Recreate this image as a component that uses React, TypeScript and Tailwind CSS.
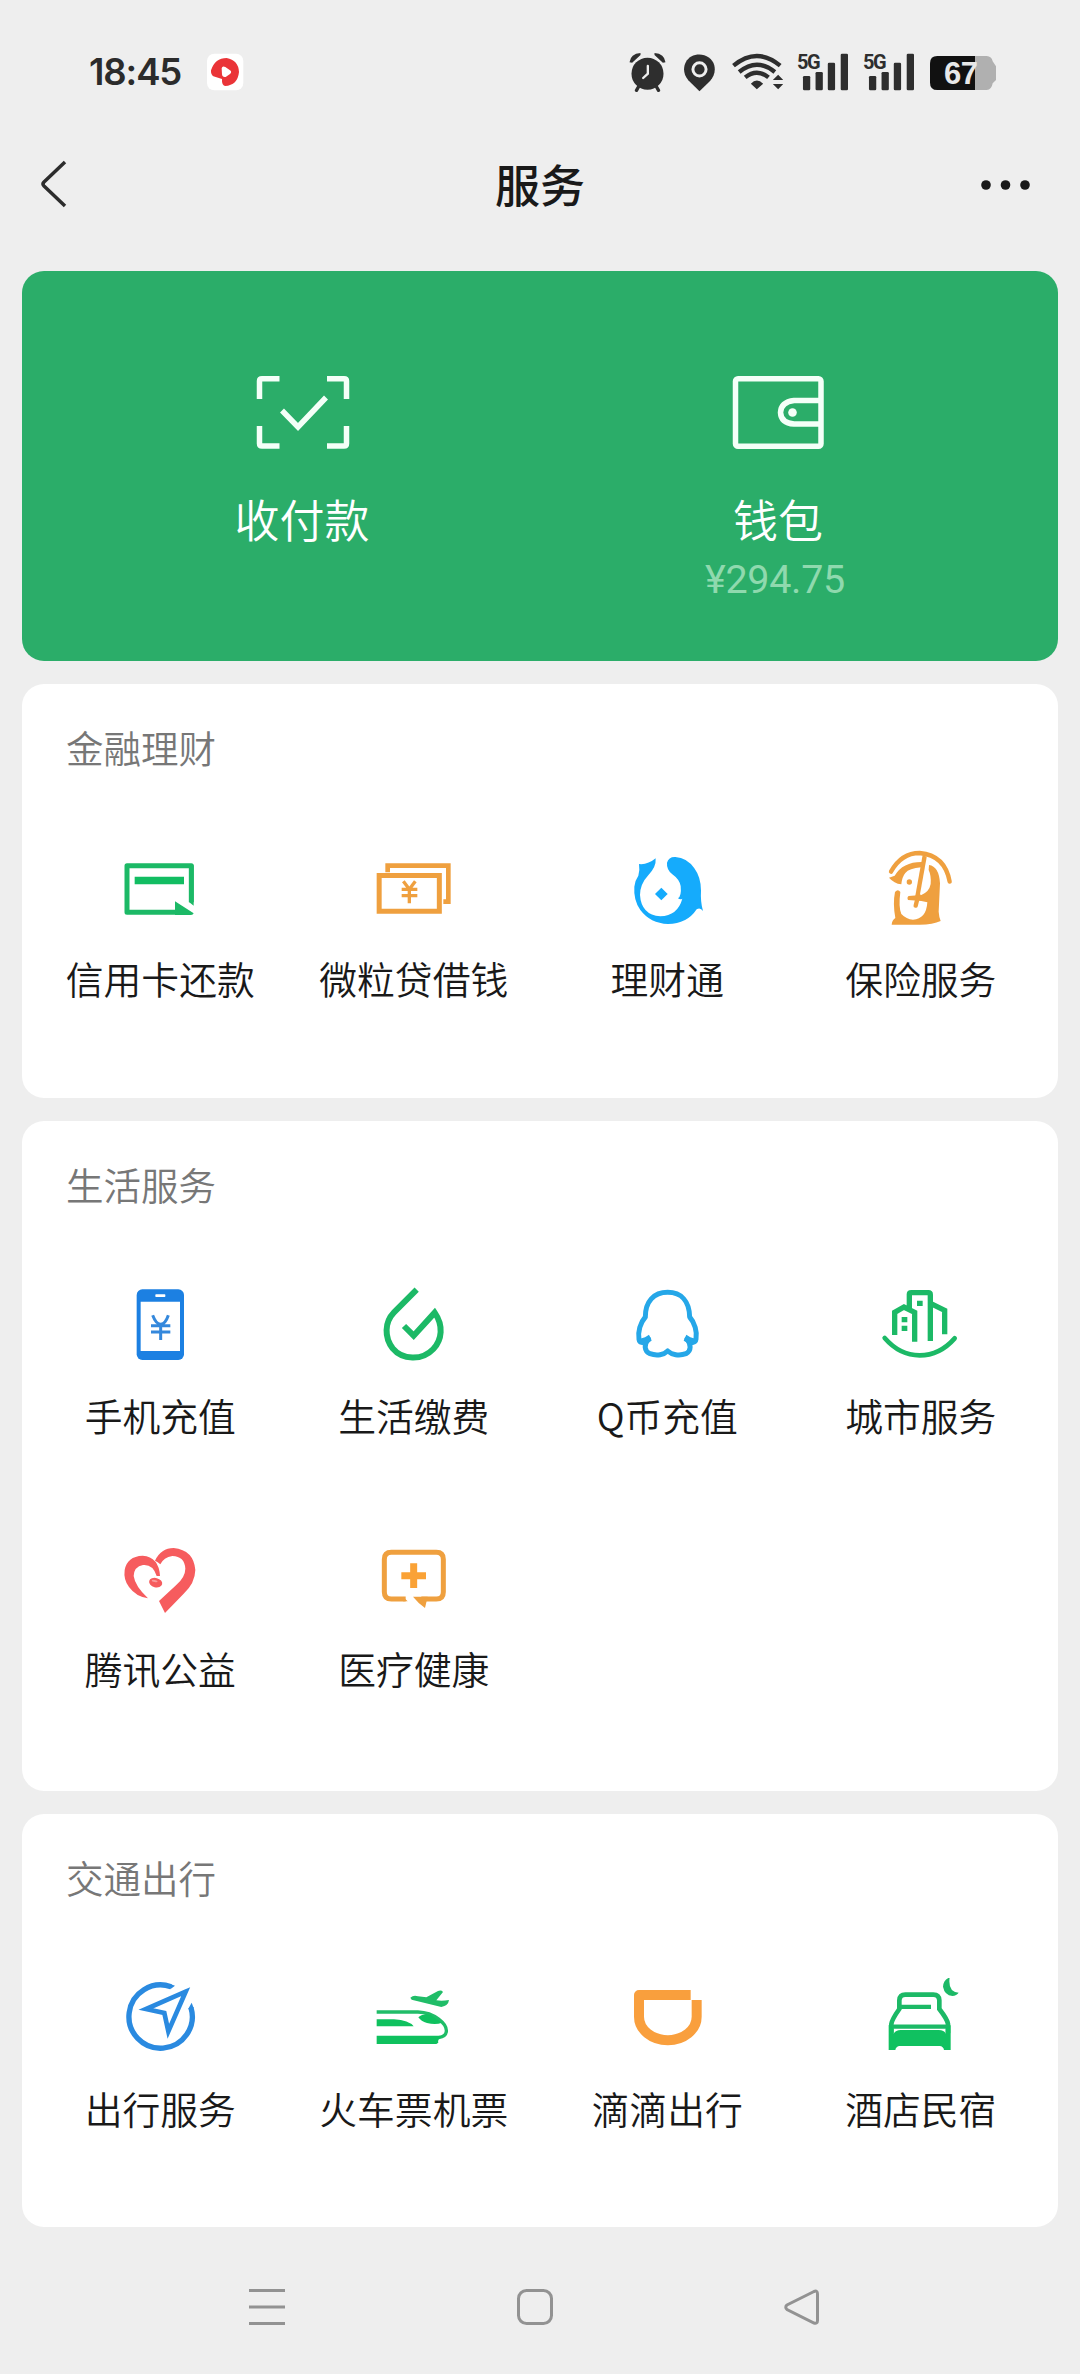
import type { ReactNode } from 'react';

const GREEN = '#1cb966';
const ORANGE = '#efa03f';
const BLUE = '#2a8ae0';

function Icon({ box, children }: { box: string; children: ReactNode }) {
  return (
    <svg viewBox={box} className="h-20 w-20 shrink-0" fill="none">
      {children}
    </svg>
  );
}

const CreditCard = () => (
  <Icon box="239 84 240 240">
    <path d="M453 247V137H260V277H410" stroke={GREEN} strokeWidth="15" strokeLinejoin="round" />
    <path d="M446 136h14v121l-14-11zM404 244l56 36q-2 5-8 5h-48z" fill={GREEN} />
    <path d="M283 170h148v23H283z" fill="#12bd62" />
  </Icon>
);

const Cash = () => (
  <Icon box="1000 84 240 240">
    <path d="M1044 157V137H1226V245H1211" stroke={ORANGE} strokeWidth="14" />
    <path d="M1018.500 166.500H1199V274H1018.500z" stroke={ORANGE} strokeWidth="15" />
    <path d="M1091 184l18 24 18-24M1109 208v42M1086 208h47M1086 227h47" stroke={ORANGE} strokeWidth="10" />
  </Icon>
);

const Fish = () => (
  <Icon box="260 84 240 240">
    <path
      fill="#15abfc"
      d="M296 132Q322 135 346 115Q348 141 325 164Q299 192 299 225Q303 285 360 289Q412 287 426 236Q420 240 413 235Q424 228 421 198Q417 178 396 163Q378 148 380 128Q385 110 405 111Q440 113 462 145Q482 172 482 212Q480 245 488 273Q480 261 469 268Q440 312 383 312Q330 310 300 270Q279 240 282 200Q284 181 294 167Q299 150 296 132Z"
    />
    <path d="M363 203l19 19-19 19-19-19z" fill="#15abfc" />
  </Icon>
);

const Insurance = () => (
  <Icon box="1021 84 240 240">
    <path d="M1054 155Q1085 99 1140 99Q1216 106 1230 185" stroke={ORANGE} strokeWidth="13" strokeLinecap="round" />
    <path d="M1155 108L1132 236" stroke={ORANGE} strokeWidth="13" />
    <path d="M1136 225L1128 257" stroke={ORANGE} strokeWidth="13" strokeLinecap="round" />
    <path fill={ORANGE} d="M1048 173L1065 167Q1090 125 1148 126L1145 142Q1108 145 1097 159Q1087 171 1085 193Q1063 190 1048 173Z" />
    <circle cx="1109" cy="186" r="8" fill={ORANGE} />
    <path
      fill={ORANGE}
      d="M1168 135Q1198 139 1201 190L1197 275Q1198 290 1203 303Q1180 314 1140 314H1056Q1057 301 1067 294Q1059 250 1066 216Q1075 205 1082 216Q1076 262 1085 282Q1100 298 1120 299Q1160 297 1163 247L1145 243L1105 240Q1101 232 1107 228L1145 225Q1169 215 1173 192Q1175 167 1167 150Z"
    />
  </Icon>
);

const Phone = () => (
  <Icon box="239 75 240 240">
    <rect x="289" y="88" width="142" height="212" rx="17" fill="#1c80e2" />
    <path d="M301 125h118v148H301z" fill="#fff" />
    <rect x="345" y="103" width="30" height="8" rx="2" fill="#fff" />
    <path d="M337 166q10 27 24 27t23-27M361 193v47M332 197h58M332 216h58" stroke="#3488dc" strokeWidth="9" />
  </Icon>
);

const Drop = () => (
  <Icon box="1000 75 240 240">
    <path
      d="M1131 89L1063 157C1034 187 1034 232 1059 265C1088 300 1147 303 1181 267C1207 239 1212 197 1185 158L1122 227L1093 198"
      stroke={GREEN}
      strokeWidth="18"
    />
  </Icon>
);

const Penguin = () => (
  <Icon box="260 75 240 240">
    <path
      d="M382 97C340 97 315 125 315 171C300 188 292 215 296 238C298 251 310 249 325 237C310 253 311 273 329 281C350 289 371 284 382 273C394 284 416 289 437 281C454 273 452 253 440 237C455 250 465 249 467 237C471 215 463 188 448 171C447 124 423 97 382 97Z"
      stroke="#25a7e8"
      strokeWidth="15"
      strokeLinejoin="round"
    />
    <path d="M294 238q4 20 18 16l22-12-8-18-12 8zM470 238q-4 20-18 16l-22-12 8-18 12 8z" fill="#25a7e8" />
  </Icon>
);

const City = () => (
  <Icon box="1021 75 240 240">
    <path d="M1035 234Q1080 286 1140 286T1245 235" stroke={GREEN} strokeWidth="14" strokeLinecap="round" />
    <path
      d="M1065 225V157L1093 141L1125 157V245M1109 152V103Q1109 98 1115 98H1166Q1172 98 1172 104V243M1174 131L1215 151V223"
      stroke={GREEN}
      strokeWidth="16"
    />
    <path d="M1086 171h17v16h-17zM1086 197h17v16h-17zM1132 122h17v16h-17z" fill={GREEN} />
  </Icon>
);

const Heart = () => (
  <Icon box="239 54 240 240">
    <path fill="#f65c5e" d="M344 122Q362 84 400 84Q460 90 465 150Q464 190 430 221L374 279Q367 265 356 243L407 196Q435 171 435 146Q433 109 396 108Q370 112 360 133Q352 126 344 122Z" />
    <path fill="#f65c5e" d="M349 168Q338 132 308 135Q281 140 280 168Q284 198 323 235Q287 230 266 201Q249 179 253 150Q260 109 307 107Q356 111 359 168Z" />
    <ellipse cx="346" cy="188" rx="20" ry="14" transform="rotate(14 346 188)" fill="#f65c5e" />
    <ellipse cx="343" cy="183" rx="9" ry="3" transform="rotate(12 343 183)" fill="#f99a9b" />
  </Icon>
);

const Medical = () => (
  <Icon box="1000 54 240 240">
    <path d="M1098 237H1055Q1034 237 1034 216V118Q1034 97 1055 97H1190Q1211 97 1211 118V216Q1211 237 1190 237H1145" stroke={ORANGE} strokeWidth="15" />
    <path d="M1090 230l14 14h-14zM1120 230h44l-8 34q-20-14-36-34z" fill={ORANGE} />
    <path d="M1085 167h74M1122 130v74" stroke="#faa236" strokeWidth="21" />
  </Icon>
);

const Compass = () => (
  <Icon box="239 84 240 240">
    <path d="M392 110A95 95 0 1 0 452 173" stroke={BLUE} strokeWidth="16" />
    <path d="M388 101l16 6-14 11zM454 158l6 16-17 4z" fill={BLUE} />
    <path d="M436 125L317 177L372 189L384 244Z" stroke={BLUE} strokeWidth="14" />
  </Icon>
);

const Train = () => (
  <Icon box="1000 84 240 240">
    <path d="M1011 186H1135C1185 188 1222 222 1220 244Q1219 259 1197 263" stroke="#20bd68" strokeWidth="10" />
    <path d="M1011 208H1063Q1108 211 1122 229H1011zM1011 257H1210Q1192 268 1196 278L1190 282H1011zM1136 202Q1150 189 1172 194L1207 218Q1188 226 1162 219Q1144 214 1136 202Z" fill="#0fc15e" />
    <path d="M1112 143Q1122 134 1135 139L1160 142L1195 123Q1205 119 1210 126L1190 151Q1207 154 1228 150Q1226 167 1205 171L1116 149Z" fill="#20bd68" />
  </Icon>
);

const Didi = () => (
  <Icon box="260 84 240 240">
    <path d="M451 135H296V200A86 70 0 0 0 469 200V150" stroke="#f99f3d" strokeWidth="30" strokeLinejoin="round" />
  </Icon>
);

const Hotel = () => (
  <Icon box="1021 84 240 240">
    <path d="M1055 250V222Q1057 208 1079 177V151Q1080 134 1097 134H1181Q1198 134 1199 151V177Q1223 208 1225 222V250" stroke={GREEN} strokeWidth="14" />
    <path d="M1080 170.500H1174M1055 230H1225" stroke={GREEN} strokeWidth="13" />
    <path d="M1047 225L1062 236V251Q1068 240 1083 240H1197Q1214 240 1218 251V236L1233 225V300H1213Q1211 289 1200 288H1080Q1069 289 1067 300H1047Z" fill="#10c160" />
    <path d="M1230 82Q1211 90 1210 110Q1215 136 1238 138Q1251 137 1257 128Q1224 126 1230 82Z" fill={GREEN} />
  </Icon>
);

type Item = { label: string; icon: ReactNode };

function Section({ title, items, size }: { title: string; items: Item[]; size: string }) {
  return (
    <section className={`rounded-[22px] bg-white px-[11px] ${size}`}>
      <h2 className="pt-[35px] pl-[33px] text-[37.500px] leading-[56px] font-[350] text-[#777]">{title}</h2>
      <div className="mt-[73px] grid grid-cols-4 gap-y-[89px]">
        {items.map((item) => (
          <div key={item.label} className="flex h-[164px] flex-col items-center">
            {item.icon}
            <span className="mt-[22px] pl-px text-[37.800px] leading-[56px] font-[350] whitespace-nowrap">{item.label}</span>
          </div>
        ))}
      </div>
    </section>
  );
}

function Signal() {
  return (
    <div className="relative h-10 w-[51px]">
      <span className="absolute top-[-2px] left-0 font-['Liberation_Sans_Narrow','Roboto'] text-[20px] leading-6 font-bold tracking-[-1.5px] text-[#2e2e2e]">
        5G
      </span>
      <svg viewBox="558 66 154 120" className="h-10 w-[51px]" fill="#2e2e2e">
        <rect x="576" y="138" width="22" height="43" rx="4" />
        <rect x="614" y="126" width="22" height="55" rx="4" />
        <rect x="651" y="98" width="22" height="83" rx="4" />
        <rect x="690" y="71" width="22" height="110" rx="4" />
      </svg>
    </div>
  );
}

function StatusBar() {
  return (
    <header className="flex h-[124px] items-start justify-between pt-[52px] pr-[84px] pl-[89px]">
      <div className="flex items-center">
        <span className="w-[118px] font-[Inter] text-[36.500px] leading-10 font-semibold tracking-[-1.1px] text-[#2b2b2b]">18:45</span>
        <svg viewBox="441 66 111 120" className="h-10 w-[37px]">
          <rect x="441" y="71" width="109" height="110" rx="22" fill="#fff" />
          <path d="M453 121Q465 84 500 84Q535 90 537 126Q533 166 495 168Q485 166 486 147L460 139Q452 133 453 121Z" fill="#ea3438" />
          <path d="M485 115q2-9 11-4l14 10q7 5 0 11l-13 9q-10 2-11-8z" fill="#fff" />
        </svg>
      </div>
      <div className="flex items-center">
        <svg viewBox="57 66 110 120" className="h-10 w-[37px]" fill="#2e2e2e">
          <circle cx="112" cy="131" r="48" />
          <path d="M58 97Q61 71 91 69L91 75L66 98ZM166 97Q163 71 133 69L133 75L158 98Z" />
          <path d="M88 165l-9 16M136 165l9 16" stroke="#2e2e2e" strokeWidth="10" strokeLinecap="round" />
          <path d="M113 108v23l-14 13" fill="none" stroke="#eee" strokeWidth="7" strokeLinecap="round" />
        </svg>
        <svg viewBox="220 66 94 120" className="ml-[18px] h-10 w-[31px]" fill="#2e2e2e">
          <path d="M267 184L233 151C212 127 218 93 242 79C270 64 305 78 312 106C316 124 311 140 299 153Z" />
          <circle cx="267" cy="118" r="20" fill="none" stroke="#eee" strokeWidth="9" />
        </svg>
        <svg viewBox="364 66 152 120" className="ml-[17px] h-10 w-[51px]" fill="none" stroke="#2e2e2e" strokeWidth="13">
          <path d="M368 107Q438 49 508 107M385 126Q438 82 492 126M403 142Q438 114 473 142" />
          <path d="M420 161Q438 142 457 161L438 178ZM486 150l16-16 15 16zM486 162l16 16 15-16z" fill="#2e2e2e" stroke="none" />
        </svg>
        <div className="ml-[14px]"><Signal /></div>
        <div className="ml-[15px]"><Signal /></div>
        <div className="relative ml-[16px] h-10 w-[66px]">
          <svg viewBox="960 66 198 120" className="h-10 w-[66px]">
            <path d="M1095 78H1130Q1145 79 1148 94L1158 109V150L1148 160Q1145 179 1130 180H1095Z" fill="#b0b0b0" />
            <path d="M1095 78H982Q960 78 960 100V158Q960 180 982 180H1095Z" fill="#111" />
          </svg>
          <span className="absolute top-0.5 left-[14px] font-['Liberation_Sans'] text-[31px] leading-10 font-bold tracking-[-0.5px] text-[#e8e8e8]">
            67
          </span>
        </div>
      </div>
    </header>
  );
}

export default function App() {
  return (
    <div className="flex h-[2374px] w-[1080px] flex-col bg-[#eeeeee] font-['Noto_Sans_CJK_SC',sans-serif] text-[#191919]">
      <StatusBar />
      <div className="flex h-[147px] items-start justify-between pr-[50px] pl-[40px]">
        <svg viewBox="0 0 26 48" className="mt-9 h-12 w-[50px]" fill="none" stroke="#2c2c2c" strokeWidth="3.5" preserveAspectRatio="xMinYMid">
          <path d="M25 2L4 22Q2 24 4 26L25 46" />
        </svg>
        <h1 className="mt-[28px] pl-[10px] text-[45px] leading-[64px] font-medium">服务</h1>
        <svg viewBox="0 0 50 12" className="mt-[55px] h-3 w-[50px]" fill="#191919">
          <circle cx="6" cy="6" r="4.800" />
          <circle cx="25.500" cy="6" r="4.800" />
          <circle cx="45" cy="6" r="4.800" />
        </svg>
      </div>
      <main className="mx-[22px] flex flex-col gap-[23px]">
        <section className="grid h-[390px] grid-cols-2 rounded-[22px] bg-[#2bad69] px-[42px] pt-[100px] text-white">
          <div className="flex flex-col items-center">
            <svg viewBox="0 0 100 82" className="h-[82px] w-[100px]" fill="none" stroke="#f4fff8" strokeWidth="5.500">
              <path d="M27.500 7.700H10Q7.500 7.700 7.500 10V28M75 7.700H92Q94.500 7.700 94.500 10V28M27.500 75H10Q7.500 75 7.500 72.500V55M75 75H92Q94.500 75 94.500 72.500V55" />
              <path d="M30 39.500L46 56L74 26.500" />
            </svg>
            <span className="mt-[34px] text-[45px] leading-[64px] font-[350]">收付款</span>
          </div>
          <div className="flex flex-col items-center">
            <svg viewBox="0 0 100 82" className="h-[82px] w-[100px]" fill="none" stroke="#f4fff8" strokeWidth="5.500">
              <rect x="7.500" y="7.700" width="85.500" height="67.500" rx="2.500" />
              <path d="M93 29.500H66Q53 31 52.500 41.500Q53 52 66 53H93" />
              <circle cx="64.500" cy="41.500" r="4.300" fill="#f4fff8" stroke="none" />
            </svg>
            <span className="mt-[34px] text-[45px] leading-[64px] font-[350]">钱包</span>
            <span className="mt-[6px] mr-[6px] font-[Roboto] text-[39.500px] leading-[46px] tracking-[-0.3px] text-[#8fd9ae]">¥294.75</span>
          </div>
        </section>
        <Section
          title="金融理财"
          size="h-[414px]"
          items={[
            { label: '信用卡还款', icon: <CreditCard /> },
            { label: '微粒贷借钱', icon: <Cash /> },
            { label: '理财通', icon: <Fish /> },
            { label: '保险服务', icon: <Insurance /> },
          ]}
        />
        <Section
          title="生活服务"
          size="h-[670px]"
          items={[
            { label: '手机充值', icon: <Phone /> },
            { label: '生活缴费', icon: <Drop /> },
            { label: 'Q币充值', icon: <Penguin /> },
            { label: '城市服务', icon: <City /> },
            { label: '腾讯公益', icon: <Heart /> },
            { label: '医疗健康', icon: <Medical /> },
          ]}
        />
        <Section
          title="交通出行"
          size="h-[413px]"
          items={[
            { label: '出行服务', icon: <Compass /> },
            { label: '火车票机票', icon: <Train /> },
            { label: '滴滴出行', icon: <Didi /> },
            { label: '酒店民宿', icon: <Hotel /> },
          ]}
        />
      </main>
      <nav className="flex items-start justify-between pt-[60px] pr-[258px] pl-[247px]">
        <svg viewBox="0 0 40 40" className="h-10 w-10" stroke="#929292" strokeWidth="3">
          <path d="M2 3.500H38M2 20H38M2 36.500H38" />
        </svg>
        <svg viewBox="0 0 40 40" className="h-10 w-10" fill="none" stroke="#929292" strokeWidth="3">
          <rect x="3.500" y="3.500" width="33" height="33" rx="8" />
        </svg>
        <svg viewBox="0 0 40 40" className="h-10 w-10" fill="none" stroke="#929292" strokeWidth="3">
          <path d="M32 4.500L5 18Q2.500 20 5 22.500L32 36Q35.500 37 35.500 33.500V7Q35.500 3 32 4.500Z" />
        </svg>
      </nav>
    </div>
  );
}
